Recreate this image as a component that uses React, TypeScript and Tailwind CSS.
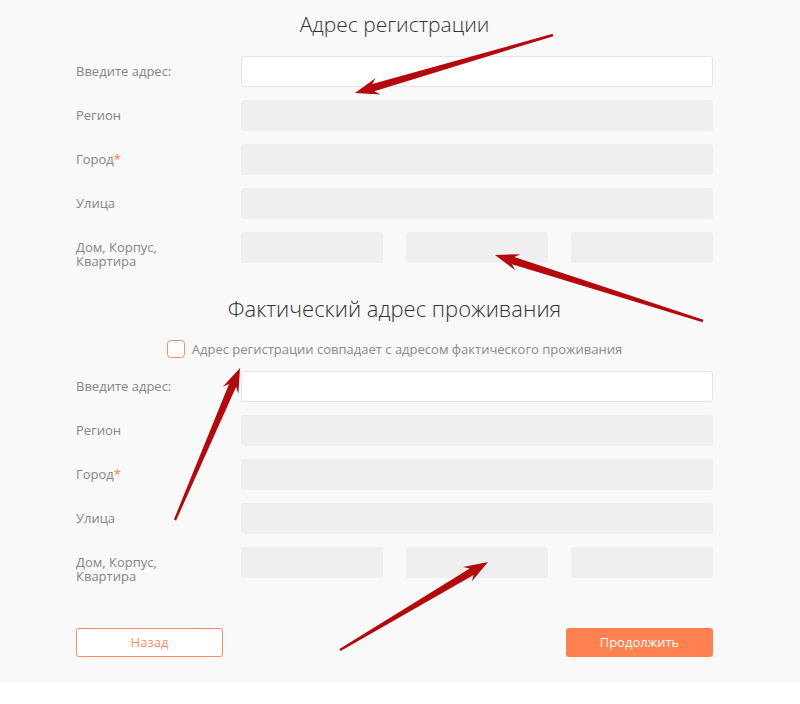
import React from 'react';

type Pt = [number, number];

const arrows: { tail: Pt; head: Pt }[] = [
  { tail: [553, 35], head: [355, 93] },
  { tail: [703, 321], head: [495, 255] },
  { tail: [175, 520], head: [240, 368] },
  { tail: [340, 650], head: [488, 562] },
];

function arrowPoints(tail: Pt, head: Pt) {
  const dx = head[0] - tail[0];
  const dy = head[1] - tail[1];
  const len = Math.hypot(dx, dy);
  const ux = dx / len;
  const uy = dy / len;
  const nx = -uy;
  const ny = ux;
  const headLen = 24;
  const base: Pt = [head[0] - ux * headLen, head[1] - uy * headLen];
  const at = (p: Pt, w: number): string => `${p[0] + nx * w},${p[1] + ny * w}`;
  const shaftEnd: Pt = [base[0] + ux * 5, base[1] + uy * 5];
  return [
    at(tail, 1.2),
    at(shaftEnd, 3.8),
    at(base, 8.5),
    `${head[0]},${head[1]}`,
    at(base, -8.5),
    at(shaftEnd, -3.8),
    at(tail, -1.2),
  ].join(' ');
}

function Field({ label, required, white, split }: { label: string; required?: boolean; white?: boolean; split?: boolean }) {
  return (
    <div className="flex h-[31px] items-start">
      <div className="w-[165px] shrink-0 pt-[8px] text-[13px] leading-[14px] text-[#858585] whitespace-pre-line">
        {label}
        {required ? <span className="text-[#ff7a4d]">*</span> : null}
      </div>
      {split ? (
        <div className="flex flex-1 gap-[23px]">
          <div className="h-[31px] flex-1 rounded-[3px] bg-[#f0eff0]" />
          <div className="h-[31px] flex-1 rounded-[3px] bg-[#f0eff0]" />
          <div className="h-[31px] flex-1 rounded-[3px] bg-[#f0eff0]" />
        </div>
      ) : white ? (
        <div className="h-[31px] flex-1 rounded-[3px] border border-[#e6e6e6] bg-white" />
      ) : (
        <div className="h-[31px] flex-1 rounded-[3px] bg-[#f0eff0]" />
      )}
    </div>
  );
}

function Fields() {
  return (
    <div className="flex flex-col gap-[13px]">
      <Field label="Введите адрес:" white />
      <Field label="Регион" />
      <Field label="Город" required />
      <Field label="Улица" />
      <Field label={'Дом, Корпус,\nКвартира'} split />
    </div>
  );
}

export default function App() {
  return (
    <div className="relative bg-white" style={{ fontFamily: '"Open Sans", "Liberation Sans", sans-serif' }}>
      <div className="bg-[#f9f9f9] pt-[10px] pb-[25px]">
        <div className="ml-[76px] w-[637px]">
          <h2 className="text-center text-[21px] leading-[28px] font-light text-[#333]">Адрес регистрации</h2>
          <div className="mt-[18px]">
            <Fields />
          </div>
          <h2 className="mt-[31px] text-center text-[22px] leading-[28px] font-light text-[#333]">Фактический адрес проживания</h2>
          <div className="mt-[18px] flex items-center justify-center gap-[7px]">
            <div className="h-[18px] w-[18px] rounded-[4px] border border-[#ff8c66] bg-white" />
            <span className="text-[13px] leading-[18px] text-[#8a8a8a]">Адрес регистрации совпадает с адресом фактического проживания</span>
          </div>
          <div className="mt-[13px]">
            <Fields />
          </div>
          <div className="mt-[50px] flex justify-between">
            <button className="h-[29px] w-[147px] rounded-[3px] border border-[#ff8c66] bg-white text-[13px] text-[#ff8c66]">Назад</button>
            <button className="h-[29px] w-[147px] rounded-[3px] bg-[#ff8150] text-[13px] text-white">Продолжить</button>
          </div>
        </div>
      </div>
      <div className="h-[23px]" />
      <svg className="pointer-events-none absolute left-0 top-0" width="800" height="704">
        {arrows.map((a, i) => (
          <polygon key={i} points={arrowPoints(a.tail, a.head)} fill="#b5080c" />
        ))}
      </svg>
    </div>
  );
}
